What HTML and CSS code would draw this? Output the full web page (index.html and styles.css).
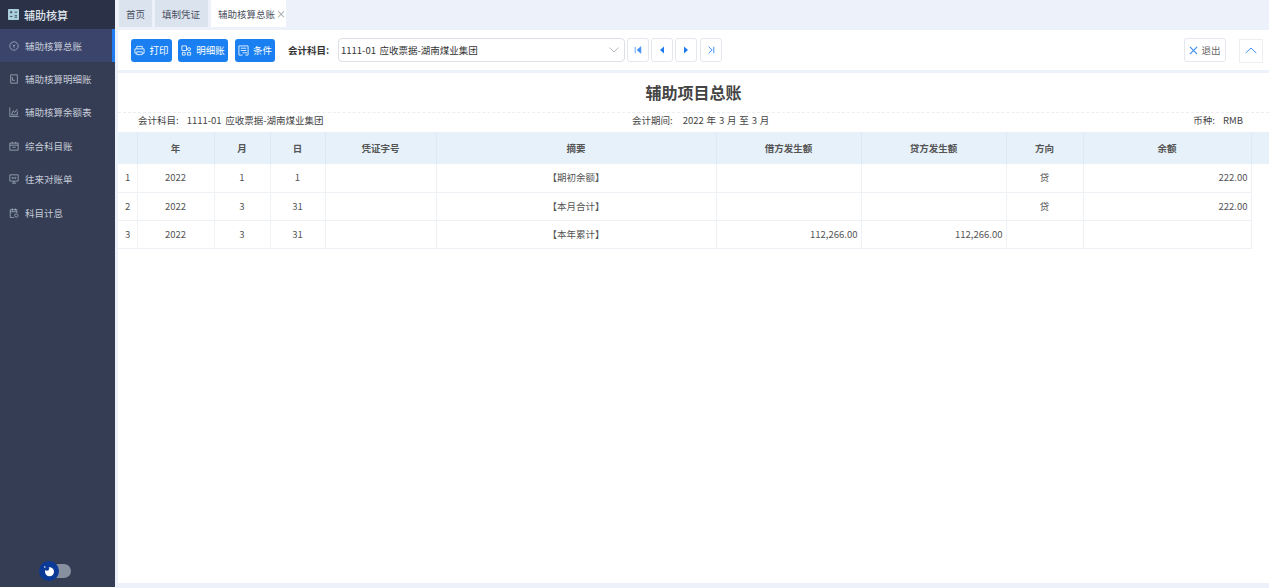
FILE: index.html
```html
<!DOCTYPE html>
<html lang="zh">
<head>
<meta charset="utf-8">
<title>辅助核算总账</title>
<link rel="stylesheet" href="styles.css">
</head>
<body>
<div class="app">
  <aside class="sidebar">
    <div class="brand">
      <svg class="brand-icon" viewBox="0 0 14 14"><rect width="14" height="14" rx="1" fill="#a9cfdc"/><path d="M2.500 4h3M4 2.500v3M8.500 4h3M2.500 9.500h3M8.500 8.500h3M8.500 10.500h3" stroke="#2b3248" stroke-width="1" fill="none"/></svg>
      <span>辅助核算</span>
    </div>
    <nav class="menu">
      <a class="item active"><svg class="ico" viewBox="0 0 12 12"><circle cx="6" cy="6" r="5"/><path d="M4.500 4.500 6 6l1.500-1.500M6 6v2"/></svg><span>辅助核算总账</span></a>
      <a class="item"><svg class="ico" viewBox="0 0 12 12"><path d="M2 1h8v10H2zM4 3.500v4h3"/></svg><span>辅助核算明细账</span></a>
      <a class="item"><svg class="ico" viewBox="0 0 12 12"><path d="M1 .5v11h10.500M3 9.500l2-5 2 2 3-4M3 9.500h7V5"/></svg><span>辅助核算余额表</span></a>
      <a class="item"><svg class="ico" viewBox="0 0 12 12"><path d="M1 2.500h10v8.500H1zM1 5h10M4 1v2M8 1v2M4 7.500h4"/></svg><span>综合科目账</span></a>
      <a class="item"><svg class="ico" viewBox="0 0 12 12"><path d="M1 1h10v7.500H1zM3.500 11h5M6 8.500V11M4 3.500v2.500M6 3.500v2.500M8 3.500v2.500"/></svg><span>往来对账单</span></a>
      <a class="item"><svg class="ico" viewBox="0 0 12 12"><path d="M1.500 2h8v4M1.500 2v9.500h4.500M1.500 4.500h8M4 .5v3M7.500 .5v3"/><circle cx="8.800" cy="9" r="2"/></svg><span>科目计息</span></a>
    </nav>
    <div class="theme">
      <div class="switch">
        <span class="knob"><svg viewBox="0 0 14 14"><circle cx="7.500" cy="7.800" r="4.500" fill="#fff"/><circle cx="5" cy="4.600" r="2.200" fill="#0b3a96"/><circle cx="2.800" cy="3" r=".8" fill="#fff"/></svg></span>
      </div>
    </div>
  </aside>

  <main class="main">
    <div class="tabs">
      <div class="tab">首页</div>
      <div class="tab">填制凭证</div>
      <div class="tab current">辅助核算总账<span class="close">×</span></div>
    </div>

    <div class="toolbar">
      <button class="btn w-print"><svg class="btn-ico" viewBox="0 0 12 12"><path d="M3 4V1.500h6V4M2.500 9H1V4.200h10V9H9.500M3 7.500h6v3H3z"/></svg>打印</button>
      <button class="btn w-detail"><svg class="btn-ico" viewBox="0 0 12 12"><path d="M1 1h5v5H1zM1.500 8h3v3h-3zM7 8h3.500v3H7z"/><circle cx="8.800" cy="4.500" r="1.600"/></svg>明细账</button>
      <button class="btn w-cond"><svg class="btn-ico" viewBox="0 0 12 12"><path d="M5 11H1V1h10v10H8M3 3.500h6M3 6h6M5 8.500h5"/></svg>条件</button>
      <label class="subject-label">会计科目:</label>
      <div class="select">
        <span>1111-01 应收票据-湖南煤业集团</span>
        <svg class="chev" viewBox="0 0 10 6"><path d="M.5.5 5 5 9.500.5"/></svg>
      </div>
      <div class="pager">
        <button class="page"><svg viewBox="0 0 10 10"><path d="M1.500 1v8M8.500 1 4 5l4.500 4z" fill="#3f8ef5" stroke="#3f8ef5"/></svg></button>
        <button class="page"><svg viewBox="0 0 10 10"><path d="M7.500 .5 2.500 5l5 4.500z" fill="#1e7cf0"/></svg></button>
        <button class="page"><svg viewBox="0 0 10 10"><path d="M2.500 .5 7.500 5l-5 4.500z" fill="#1e7cf0"/></svg></button>
        <button class="page"><svg viewBox="0 0 10 10"><path d="M8.500 1v8M2 1l4.500 4L2 9" fill="none" stroke="#3f8ef5" stroke-width="1.200"/></svg></button>
      </div>
      <div class="spacer"></div>
      <button class="exit"><svg viewBox="0 0 10 10"><path d="M1 1l8 8M9 1 1 9" stroke="#3f8ef5" stroke-width="1.300" fill="none"/></svg>退出</button>
      <button class="collapse"><svg viewBox="0 0 12 7"><path d="M.7 6 6 1l5.300 5" stroke="#3f8ef5" fill="none"/></svg></button>
    </div>

    <section class="report">
      <h1 class="title">辅助项目总账</h1>
      <div class="meta">
        <div class="meta-left"><span class="k">会计科目:</span>1111-01 应收票据-湖南煤业集团</div>
        <div class="meta-mid"><span class="k">会计期间:</span>2022 年 3 月 至 3 月</div>
        <div class="meta-right"><span class="k">币种:</span>RMB</div>
      </div>
      <table class="ledger">
        <colgroup>
          <col class="c-no"><col class="c-y"><col class="c-m"><col class="c-d"><col class="c-v"><col class="c-s"><col class="c-amt"><col class="c-amt"><col class="c-dir"><col class="c-bal"><col class="c-sb">
        </colgroup>
        <thead>
          <tr><th></th><th>年</th><th>月</th><th>日</th><th>凭证字号</th><th>摘要</th><th>借方发生额</th><th>贷方发生额</th><th>方向</th><th>余额</th><th class="sb"></th></tr>
        </thead>
        <tbody>
          <tr><td class="no">1</td><td>2022</td><td>1</td><td>1</td><td></td><td>【期初余额】</td><td></td><td></td><td>贷</td><td class="num">222.00</td><td class="sb"></td></tr>
          <tr><td class="no">2</td><td>2022</td><td>3</td><td>31</td><td></td><td>【本月合计】</td><td></td><td></td><td>贷</td><td class="num">222.00</td><td class="sb"></td></tr>
          <tr><td class="no">3</td><td>2022</td><td>3</td><td>31</td><td></td><td>【本年累计】</td><td class="num">112,266.00</td><td class="num">112,266.00</td><td></td><td></td><td class="sb"></td></tr>
        </tbody>
      </table>
    </section>
    <div class="foot"></div>
  </main>
</div>
</body>
</html>
```
FILE: styles.css
```css
* { box-sizing: border-box; }
html, body { margin: 0; height: 100%; overflow: hidden; }
body {
  font-family: "Noto Sans CJK SC", "Noto Sans", sans-serif;
  font-size: 10px;
  color: #555;
  background: #fff;
}
.app { display: flex; height: 588px; }

.sidebar {
  width: 115px;
  height: 587px;
  flex: none;
  display: flex;
  flex-direction: column;
  background: #353d54;
}
.brand {
  height: 29px;
  display: flex;
  align-items: center;
  gap: 5px;
  padding-left: 8px;
  background: #2b3248;
  color: #dfe3ea;
  font-size: 11px;
  font-weight: 500;
}
.brand-icon { width: 11px; height: 11px; }
.menu { display: flex; flex-direction: column; flex: 1; }
.item {
  height: 33.400px;
  display: flex;
  align-items: center;
  gap: 6px;
  padding-left: 9px;
  color: #c6ccd8;
  font-size: 9.500px;
}
.item.active {
  background: #3b456c;
  border-right: 3px solid #1e7cf0;
}
.ico {
  width: 10px;
  height: 10px;
  flex: none;
  fill: none;
  stroke: #a8b8c4;
  stroke-width: .9;
}
.theme { height: 28px; position: relative; }
.switch {
  position: absolute;
  left: 51px;
  top: 5px;
  width: 20px;
  height: 14px;
  background: #87909e;
  border-radius: 7px;
}
.knob {
  position: absolute;
  left: -12px;
  top: -3px;
  width: 20px;
  height: 20px;
  padding: 3px;
  border-radius: 50%;
  background: #0b3a96;
}
.knob svg { display: block; width: 14px; height: 14px; }

.main {
  flex: 1;
  min-width: 0;
  display: flex;
  flex-direction: column;
  padding-left: 3px;
  background: #edf1f9;
}
.tabs {
  height: 27px;
  flex: none;
  display: flex;
  gap: 3px;
  padding-left: 1px;
}
.tab {
  height: 27px;
  padding: 0 7px;
  display: flex;
  align-items: center;
  font-size: 9.500px;
  background: #dbe3ef;
  color: #4a5060;
}
.tab:nth-child(2) { padding: 0 8px 0 7px; }
.tab.current { background: #fff; padding: 0 0 0 7px; width: 75px; }
.close { margin-left: 1px; color: #999; font-size: 10px; }

.toolbar {
  height: 40px;
  margin: 3px 0 0;
  flex: none;
  display: flex;
  align-items: center;
  padding-left: 13px;
  background: #fff;
}
.btn {
  height: 23px;
  margin-right: 6px;
  padding: 0;
  display: flex;
  align-items: center;
  justify-content: center;
  gap: 4px;
  border: 0;
  border-radius: 3px;
  background: #1a7ff0;
  color: #fff;
  font: 400 9.500px "Noto Sans CJK SC", sans-serif;
}
.w-print { width: 41px; }
.w-detail { width: 50px; margin-right: 7px; }
.w-cond { width: 40px; }
.btn-ico { width: 11px; height: 11px; fill: none; stroke: #fff; stroke-width: .9; }
.subject-label { margin-left: 7px; width: 50px; font-size: 9.500px; font-weight: 700; color: #333; white-space: nowrap; }
.select {
  width: 287px;
  height: 24px;
  display: flex;
  align-items: center;
  justify-content: space-between;
  padding: 0 5px 0 2px;
  border: 1px solid #dcdfe6;
  border-radius: 4px;
  font-size: 9.500px;
  word-spacing: 1.500px;
  color: #333;
}
.chev { width: 10px; height: 6px; fill: none; stroke: #b5b9c2; }
.pager { display: flex; gap: 2px; margin-left: 2px; }
.page {
  width: 22px;
  height: 24px;
  padding: 0;
  display: flex;
  align-items: center;
  justify-content: center;
  background: #fff;
  border: 1px solid #e4e7ed;
  border-radius: 3px;
}
.page:last-child { margin-left: 1px; }
.page svg { width: 8px; height: 8px; }
.spacer { flex: 1; }
.exit {
  width: 42px;
  height: 24px;
  padding: 0;
  display: flex;
  align-items: center;
  justify-content: center;
  gap: 3px;
  background: #fff;
  border: 1px solid #e4e7ed;
  border-radius: 3px;
  color: #666;
  font: 9.500px "Noto Sans CJK SC", sans-serif;
}
.exit svg { width: 9px; height: 9px; }
.collapse {
  width: 24px;
  height: 24px;
  margin: 1px 6px 0 13px;
  padding: 0;
  display: flex;
  align-items: center;
  justify-content: center;
  background: #fff;
  border: 1px solid #eceef2;
}
.collapse svg { width: 12px; height: 7px; }

.report {
  flex: 1;
  margin-top: 3px;
  background: #fff;
  min-height: 0;
}
.title {
  height: 39px;
  margin: 0;
  text-align: center;
  font-size: 16px;
  line-height: 39px;
  font-weight: 700;
  color: #444;
}
.meta {
  height: 20px;
  display: grid;
  grid-template-columns: 494px auto 1fr;
  align-items: center;
  padding: 0 26px 5px 20px;
  border-top: 1px dashed #eceef2;
  font-size: 9.500px;
  color: #444;
}
.k { margin-right: 8px; }
.meta-left { word-spacing: 1.500px; }
.meta-mid { word-spacing: .7px; }
.meta-mid .k { margin-right: 10px; }
.meta-right { text-align: right; }

.ledger {
  width: 1151px;
  border-collapse: collapse;
  table-layout: fixed;
  font-size: 9.500px;
  color: #555;
}
.c-no { width: 19px; }
.c-y { width: 77px; }
.c-m { width: 56px; }
.c-d { width: 55px; }
.c-v { width: 111px; }
.c-s { width: 280px; }
.c-amt { width: 145px; }
.c-dir { width: 77px; }
.c-bal { width: 168px; }
.c-sb { width: 18px; }
.ledger th {
  height: 32px;
  padding: 0;
  background: #e6f1fa;
  border-right: 1px solid #e0e9f3;
  font-weight: 700;
  font-size: 9.500px;
  color: #555;
}
.ledger td {
  height: 28px;
  padding: 0 0 1px;
  text-align: center;
  border-right: 1px solid #eef1f6;
  border-bottom: 1px solid #eef1f6;
}
.ledger td.no { text-align: left; padding-left: 7px; }
.ledger td.num { text-align: right; padding-right: 3px; }
.ledger td.sb { border: 0; }
.foot { height: 5px; flex: none; background: #edf1f9; }
```
